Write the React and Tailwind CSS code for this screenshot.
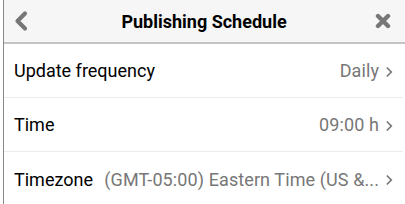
import React from "react";

const rows = [
  { label: "Update frequency", value: "Daily" },
  { label: "Time", value: "09:00 h" },
  { label: "Timezone", value: "(GMT-05:00) Eastern Time (US &..." },
];

function Chevron() {
  return (
    <svg width="8" height="12" viewBox="0 0 8 12" className="shrink-0 ml-[6px] mt-[2px]">
      <path d="M1.8 1.5 L6.3 6 L1.8 10.5" fill="none" stroke="#777" strokeWidth="1.7" />
    </svg>
  );
}

export default function App() {
  return (
    <div className="w-[405px] h-[204px] bg-white pl-[3px]">
      <div
        className="h-full border-l border-[#8a8a8a] overflow-hidden flex flex-col"
        style={{ fontFamily: "Roboto, 'Liberation Sans', sans-serif" }}
      >
        {/* Header */}
        <div className="h-[44px] shrink-0 bg-[#f6f6f6] border-b-2 border-[#c4c4c4] flex items-center justify-between pl-[9px] pr-[14px]">
          <svg width="16" height="22" viewBox="0 0 16 22">
            <path d="M12 3.5 L4.5 11 L12 18.5" fill="none" stroke="#777" strokeWidth="4.2" strokeLinecap="round" strokeLinejoin="round" />
          </svg>
          <h1 className="text-[18px] font-bold text-black ml-[4px]">Publishing Schedule</h1>
          <svg width="16" height="16" viewBox="0 0 16 16">
            <path d="M3 3 L13 13 M13 3 L3 13" stroke="#777" strokeWidth="4.4" strokeLinecap="round" />
          </svg>
        </div>

        {/* Rows */}
        <div className="flex flex-col mr-[2px]">
          {rows.map((r, i) => (
            <div
              key={r.label}
              className={`h-[54px] flex items-center pl-[10px] pr-[10px] ${i < rows.length - 1 ? "border-b border-[#ebebeb]" : ""}`}
            >
              <span className="text-[18px] text-black shrink-0">{r.label}</span>
              <div className="flex-1 min-w-0 flex items-center justify-end ml-[10px]">
                <span className="text-[18px] tracking-[0.1px] text-[#777] whitespace-nowrap">{r.value}</span>
                <Chevron />
              </div>
            </div>
          ))}
        </div>
      </div>
    </div>
  );
}
